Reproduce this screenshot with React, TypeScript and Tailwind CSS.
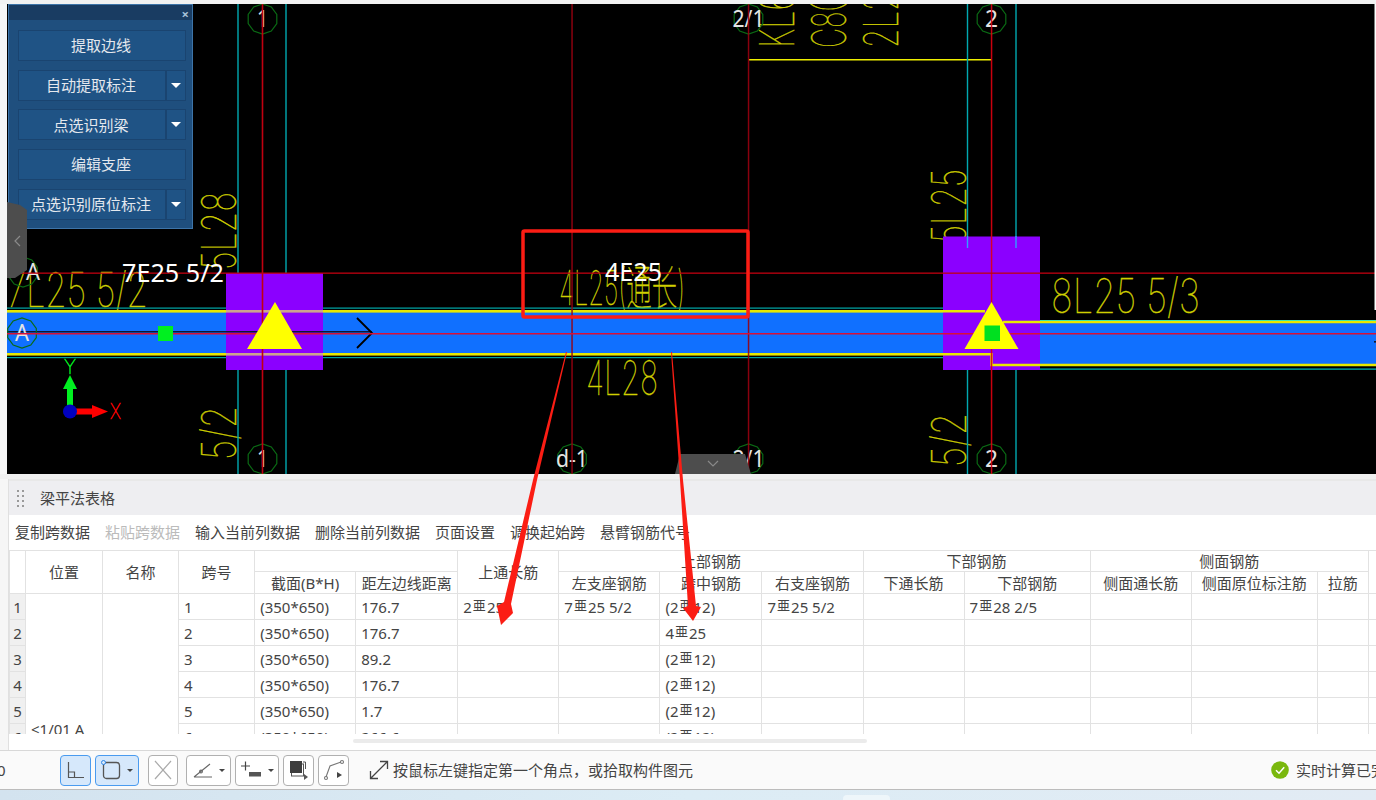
import React from "react";

const decagon = (cx: number, cy: number, r: number) =>
  Array.from({ length: 10 }, (_, i) => {
    const a = (Math.PI / 5) * i + Math.PI / 10;
    return `${(cx + r * Math.cos(a)).toFixed(1)},${(cy + r * Math.sin(a)).toFixed(1)}`;
  }).join(" ");

function Cad({ x, y, len, size = 48, rot, children }: { x: number; y: number; len: number; size?: number; rot?: boolean; children: string }) {
  return (
    <text
      x={x}
      y={y}
      textLength={len}
      lengthAdjust="spacingAndGlyphs"
      fontSize={size}
      fontWeight={100}
      fontFamily="Inter, 'Noto Sans CJK SC', sans-serif"
      fill="#d0d000"
      stroke="#d0d000"
      strokeWidth={0.4}
      transform={rot ? `rotate(-90 ${x} ${y})` : undefined}
    >
      {children}
    </text>
  );
}

function Bubble({ cx, cy, label, w, dx = 0 }: { cx: number; cy: number; label: string; w: number; dx?: number }) {
  return (
    <g>
      <polygon points={decagon(cx, cy, 15)} fill="none" stroke="#0a6a14" strokeWidth={1.2} />
      <text x={cx + dx - w / 2} y={cy + 8} textLength={w} lengthAdjust="spacingAndGlyphs" fontSize={23} fontFamily="'Noto Sans', sans-serif" fill="#e4e4e4">
        {label}
      </text>
    </g>
  );
}

function Canvas() {
  return (
    <svg width={1369} height={470} viewBox="7 4 1369 470" className="block">
      <rect x={7} y={4} width={1369} height={470} fill="#000" />
      {/* yellow annotations */}
      <Cad x={7} y={307} len={141}>7L25 5/2</Cad>
      <Cad x={559} y={305} len={126}>4L25(通长)</Cad>
      <Cad x={586} y={395} len={72}>4L28</Cad>
      <Cad x={1051} y={313} len={149}>8L25 5/3</Cad>
      <Cad x={236} y={270} len={78} rot>5L28</Cad>
      <Cad x={236} y={460} len={54} rot>5/2</Cad>
      <Cad x={966} y={243} len={74} rot>5L25</Cad>
      <Cad x={966} y={467} len={54} rot>5/2</Cad>
      <Cad x={794} y={48} len={74} rot>KL66</Cad>
      <Cad x={846} y={48} len={74} rot>C8@1</Cad>
      <Cad x={898} y={48} len={74} rot>2L25</Cad>
      <rect x={749} y={59} width={242} height={1.5} fill="#f0f000" />

      {/* left beam */}
      <rect x={7} y={307.5} width={940} height={1.2} fill="#00a8a8" />
      <rect x={7} y={357} width={940} height={1.2} fill="#00a0a0" />
      {/* right beam */}
      <rect x={1005} y={320} width={371} height={1.2} fill="#00e8e8" />
      <rect x={1005} y={368.5} width={371} height={1.2} fill="#00c0c0" />

      {/* axes: cyan */}
      {[238, 286, 967.5, 1016].map((x) => (
        <line key={x} x1={x} y1={4} x2={x} y2={474} stroke="#00a8b0" strokeWidth={1.4} />
      ))}
      <rect x={7} y={312} width={940} height={41} fill="#1070ff" />
      <rect x={1005} y={323} width={371} height={42} fill="#1070ff" />

      {/* columns */}
      <rect x={226} y={273} width={97} height={97} fill="#8b00ff" />
      <rect x={943} y={236.5} width={97} height={133.5} fill="#8b00ff" />
      <line x1={967.5} y1={236} x2={967.5} y2={248} stroke="#30a0ff" strokeWidth={1.4} />
      <line x1={1016} y1={236} x2={1016} y2={248} stroke="#30a0ff" strokeWidth={1.4} />

      {/* beam edges */}
      <rect x={7} y={310} width={219} height={2.6} fill="#e8e800" />
      <rect x={323} y={310} width={620} height={2.6} fill="#e8e800" />
      <rect x={226} y={310} width={97} height={2.6} fill="#e8e860" opacity={0.7} />
      <rect x={7} y={353} width={219} height={2.6} fill="#e8e800" />
      <rect x={323} y={353} width={620} height={2.6} fill="#e8e800" />
      <rect x={226} y={353} width={97} height={2.6} fill="#e8e860" opacity={0.7} />
      <polyline points="943,311.3 985,311.3" stroke="#e8e800" strokeWidth={2.4} fill="none" />
      <polyline points="943,354.3 991.5,354.3 991.5,365 1376,365" stroke="#e8e800" strokeWidth={2.4} fill="none" />
      <polyline points="1003,322 1376,322" stroke="#e8e800" strokeWidth={2.4} fill="none" />

      {/* black center line and arrow */}
      <rect x={7} y={331} width={365} height={1.5} fill="#101830" />
      <polyline points="357,318 372,333 357,348" fill="none" stroke="#000" strokeWidth={1.8} />
      <rect x={1374} y={341} width={2} height={1.6} fill="#101830" />

      {/* bubbles */}
      <Bubble cx={262.5} cy={19} label="1" w={11} />
      <Bubble cx={262.5} cy={459} label="1" w={11} />
      <Bubble cx={991.5} cy={19} label="2" w={13} />
      <Bubble cx={991.5} cy={459} label="2" w={13} />
      <Bubble cx={748.5} cy={19} label="2/1" w={32} />
      <Bubble cx={748.5} cy={459} label="2/1" w={32} />
      <Bubble cx={572} cy={459} label="d-1" w={32} />
      <Bubble cx={22} cy={333} label="A" w={14} />
      <Bubble cx={23} cy={272} label="A" w={14} dx={10} />

      {/* red axes */}
      <rect x={261.7} y={4} width={1.6} height={470} fill="#c00010" />
      <rect x={990.8} y={4} width={1.5} height={470} fill="#e00010" opacity={0.9} />
      <rect x={571.3} y={4} width={1.5} height={470} fill="#980010" opacity={0.9} />
      <rect x={747.8} y={4} width={1.5} height={470} fill="#980010" opacity={0.9} />
      <rect x={7} y={272.5} width={1369} height={1.3} fill="#c00010" />
      <rect x={7} y={333} width={1369} height={1.5} fill="#d81038" />

      {/* triangles & green nodes */}
      <polygon points="275,302 247,349 302,349" fill="#ffff00" />
      <polygon points="991.5,302 964.5,349 1018.5,349" fill="#ffff00" />
      <rect x={158} y={326} width={15} height={15} fill="#00f020" />
      <rect x={984.5} y={325.5} width={15.5} height={15.5} fill="#00e020" />

      {/* white labels */}
      <text x={122} y={282} textLength={102} lengthAdjust="spacingAndGlyphs" fontSize={25} fontFamily="'Noto Sans', sans-serif" fill="#ffffff">7E25 5/2</text>
      <text x={605} y={281} textLength={57} lengthAdjust="spacingAndGlyphs" fontSize={25} fontFamily="'Noto Sans', sans-serif" fill="#ffffff">4E25</text>

      {/* coordinate marker */}
      <rect x={67} y={386} width={6} height={22} fill="#00f020" />
      <polygon points="70,375 63,389 77,389" fill="#00f020" />
      <rect x={74} y={408.5} width={20} height={6} fill="#ff0000" />
      <polygon points="108,411.5 92,405 92,418" fill="#ff0000" />
      <circle cx={70} cy={411.5} r={7} fill="#0000c0" />
      <text x={64} y={374} textLength={12} lengthAdjust="spacingAndGlyphs" fontSize={20} fontWeight={100} fontFamily="Inter, sans-serif" fill="#00f020" stroke="#00f020" strokeWidth={0.6}>Y</text>
      <text x={110} y={419} textLength={11} lengthAdjust="spacingAndGlyphs" fontSize={21} fontWeight={100} fontFamily="Inter, sans-serif" fill="#ff0000" stroke="#ff0000" strokeWidth={0.6}>X</text>

      {/* collapse tab above the table */}
      <polygon points="680,454 745,454 751,474 675,474" fill="#4d4d4d" />
      <polyline points="708,461 713,466 718,461" fill="none" stroke="#8a8a8a" strokeWidth={1.2} />
      <rect x={1374.5} y={4} width={1.5} height={306} fill="#fff" />
    </svg>
  );
}

function PanelButton({ label, drop }: { label: string; drop?: boolean }) {
  return (
    <div className="flex h-[31px] w-[168px]">
      <div className="flex flex-1 items-center justify-center border border-[#1a4470] bg-[#1f5385] pr-[2px] text-[15px] text-[#e4e8ee]">{label}</div>
      {drop && (
        <div className="flex w-[20px] items-center justify-center border border-[#1a4470] bg-[#1f5385]">
          <span className="block h-0 w-0 border-x-[5px] border-t-[5px] border-x-transparent border-t-white" />
        </div>
      )}
    </div>
  );
}

const colWidths = [16, 77, 76, 76, 101, 102, 101, 101, 102, 101, 101, 126, 101, 126, 51, 40];

const Bar = () => <span className="relative top-[-3px] mx-[1px] text-[13px]">亜</span>;

const th = "border border-[#e2e2e2] pt-[1px] text-center font-normal text-[15px] leading-none overflow-hidden whitespace-nowrap";
const td = "border border-[#e2e2e2] pl-[5px] pt-[1px] text-[15px] leading-none whitespace-nowrap overflow-hidden align-middle";

const rows: { n: number; dist: string; top?: React.ReactNode; left?: React.ReactNode; mid: React.ReactNode; right?: React.ReactNode; bottom?: React.ReactNode }[] = [
  { n: 1, dist: "176.7", top: <>2<Bar />25</>, left: <>7<Bar />25 5/2</>, mid: <>(2<Bar />12)</>, right: <>7<Bar />25 5/2</>, bottom: <>7<Bar />28 2/5</> },
  { n: 2, dist: "176.7", mid: <>4<Bar />25</> },
  { n: 3, dist: "89.2", mid: <>(2<Bar />12)</> },
  { n: 4, dist: "176.7", mid: <>(2<Bar />12)</> },
  { n: 5, dist: "1.7", mid: <>(2<Bar />12)</> },
  { n: 6, dist: "266.6", mid: <>(2<Bar />12)</> },
];

function BeamTable() {
  return (
    <div className="h-[184px] overflow-hidden">
      <table className="w-[1400px] table-fixed border-collapse text-[#444]">
        <colgroup>
          {colWidths.map((w, i) => (
            <col key={i} style={{ width: w }} />
          ))}
        </colgroup>
        <thead>
          <tr className="h-[21px]">
            <th rowSpan={2} className={th}></th>
            <th rowSpan={2} className={th}>位置</th>
            <th rowSpan={2} className={th}>名称</th>
            <th rowSpan={2} className={th}>跨号</th>
            <th colSpan={2} className={th}></th>
            <th rowSpan={2} className={th}>上通长筋</th>
            <th colSpan={3} className={th}>上部钢筋</th>
            <th colSpan={2} className={th}>下部钢筋</th>
            <th colSpan={3} className={th}>侧面钢筋</th>
            <th rowSpan={2} className={th}></th>
          </tr>
          <tr className="h-[22px]">
            {["截面(B*H)", "距左边线距离", "左支座钢筋", "跨中钢筋", "右支座钢筋", "下通长筋", "下部钢筋", "侧面通长筋", "侧面原位标注筋", "拉筋"].map((t) => (
              <th key={t} className={th}>{t}</th>
            ))}
          </tr>
        </thead>
        <tbody>
          {rows.map((r) => (
            <tr key={r.n} className="h-[26px]">
              <td className="border border-[#e2e2e2] bg-[#f0f0f0] pt-[1px] text-center text-[15px] leading-none">{r.n}</td>
              {r.n === 1 && (
                <td rowSpan={10} className={td + " pt-[12px]"}>&lt;1/01 A</td>
              )}
              {r.n === 1 && <td rowSpan={10} className={td}></td>}
              <td className={td}>{r.n}</td>
              <td className={td}>(350*650)</td>
              <td className={td}>{r.dist}</td>
              <td className={td}>{r.top}</td>
              <td className={td}>{r.left}</td>
              <td className={td}>{r.mid}</td>
              <td className={td}>{r.right}</td>
              <td className={td}></td>
              <td className={td}>{r.bottom}</td>
              <td className={td}></td>
              <td className={td}></td>
              <td className={td}></td>
              <td className={td + " pl-[7px]"}>•</td>
            </tr>
          ))}
          {[7, 8, 9, 10].map((n) => (
            <tr key={n} className="h-[26px]">
              <td className="border border-[#e2e2e2] bg-[#f0f0f0]"></td>
              {Array.from({ length: 13 }, (_, i) => (
                <td key={i} className={td}></td>
              ))}
            </tr>
          ))}
        </tbody>
      </table>
    </div>
  );
}

const Caret = () => <span className="block h-0 w-0 border-x-[3px] border-t-[3px] border-x-transparent border-t-[#444]" />;

function ToolBtn({ w, active, children, caret }: { w: string; active?: boolean; children: React.ReactNode; caret?: boolean }) {
  return (
    <div className={`flex h-[31px] items-center justify-center gap-[6px] rounded-[4px] border-[1.5px] ${w} ${active ? "border-[#4a9bef] bg-[#d6e8fb]" : "border-[#b0b0b0] bg-white"}`}>
      {children}
      {caret && <Caret />}
    </div>
  );
}

function StatusBar() {
  return (
    <div className="flex h-[40px] items-center border-y border-y-[#d8d8d8] border-b-[#bcbcbc] bg-[#fafafa]">
      <span className="ml-[-3px] w-[63px] text-[15px] text-[#444]">0</span>
      <div className="flex gap-[4px]">
        <ToolBtn w="w-[31px]" active>
          <svg width="20" height="20" viewBox="0 0 20 20" fill="none" stroke="#555" strokeWidth="1.2"><path d="M2.5 2v15.5H18M2.5 12h6v5.5" /></svg>
        </ToolBtn>
        <ToolBtn w="w-[44px]" active caret>
          <svg width="20" height="20" viewBox="0 0 20 20" fill="none"><rect x="2.5" y="2.5" width="16" height="16" rx="3" stroke="#555" strokeWidth="1.3" /><circle cx="2.5" cy="2.5" r="2" fill="#d6e8fb" stroke="#2d86e8" /></svg>
        </ToolBtn>
      </div>
      <div className="ml-[9px] flex gap-[4px]">
        <ToolBtn w="w-[30px] mr-[4px]">
          <svg width="18" height="20" viewBox="0 0 18 20" fill="none" stroke="#aaa" strokeWidth="1.2"><path d="M1 1l16 18M17 1L1 19" /></svg>
        </ToolBtn>
        <ToolBtn w="w-[45px]" caret>
          <svg width="20" height="18" viewBox="0 0 20 18" fill="none" stroke="#666" strokeWidth="1.1"><path d="M1 16h18M1 16L17 3" /><circle cx="8" cy="10.5" r="1.4" /></svg>
        </ToolBtn>
        <ToolBtn w="w-[44px]" caret>
          <svg width="22" height="20" viewBox="0 0 22 20" fill="none"><path d="M1 6h9M5.5 1.5v9" stroke="#444" strokeWidth="1.2" /><rect x="9" y="12" width="12" height="4.5" fill="#555" /></svg>
        </ToolBtn>
        <ToolBtn w="w-[31px]">
          <svg width="20" height="22" viewBox="0 0 20 22" fill="none"><rect x="2.5" y="5" width="12" height="12" fill="#fff" stroke="#555" /><rect x="1" y="2" width="12" height="12" fill="#3e3e3e" /><path d="M14 3h2.5v7" stroke="#555" /><path d="M15 15l4 3-4 3z" fill="#555" /></svg>
        </ToolBtn>
        <ToolBtn w="w-[31px]">
          <svg width="22" height="22" viewBox="0 0 22 22" fill="none" stroke="#777" strokeWidth="1.1"><path d="M3 18L7 7 18 3" /><circle cx="3" cy="19" r="1.5" /><circle cx="19" cy="3" r="1.5" /><path d="M14 13l5 3-5 3z" fill="#444" stroke="none" /></svg>
        </ToolBtn>
      </div>
      <svg width="20" height="20" viewBox="0 0 20 20" fill="none" stroke="#444" strokeWidth="1.3" className="ml-[20px]">
        <path d="M1.5 18.5l17-17M11 1.5h7.5v7.5M1.5 11v7.5H9" />
      </svg>
      <span className="ml-[4px] whitespace-nowrap text-[15px] text-[#444]">按鼠标左键指定第一个角点，或拾取构件图元</span>
      <div className="ml-auto flex items-center gap-[7px]">
        <svg width="18" height="18" viewBox="0 0 18 18"><circle cx="9" cy="9" r="8.8" fill="#7ab80e" /><path d="M5 9.2l3 3 5.2-6" fill="none" stroke="#fff" strokeWidth="1.5" /></svg>
        <span className="w-[80px] overflow-hidden whitespace-nowrap text-[15px] text-[#444]">实时计算已完成</span>
      </div>
    </div>
  );
}

export default function App() {
  return (
    <div
      className="relative flex h-[800px] w-[1376px] flex-col overflow-hidden bg-[#f6f6f6] text-[#444]"
      style={{ fontFamily: "'Noto Sans', 'Noto Sans CJK SC', sans-serif" }}
    >
      <div className="h-[4px] shrink-0 bg-[#f2f2f2]" />
      <div className="relative ml-[7px] h-[470px] shrink-0">
        <Canvas />
        <div className="absolute left-[1px] top-0 h-[225px] w-[185px] border border-[#3d74a8] bg-[#1f4f7e]">
          <div className="flex h-[15px] items-center justify-end bg-[#193c62] pr-[3px] pt-[4px] text-[13px] font-bold leading-none text-[#a8c0d8]">×</div>
          <div className="flex flex-col gap-[8.7px] pl-[9px] pt-[10px]">
            <PanelButton label="提取边线" />
            <PanelButton label="自动提取标注" drop />
            <PanelButton label="点选识别梁" drop />
            <PanelButton label="编辑支座" />
            <PanelButton label="点选识别原位标注" drop />
          </div>
        </div>
        <div className="absolute left-[0px] top-[198px] h-[76px] w-[20px]">
          <svg width="20" height="76" viewBox="0 0 20 76"><polygon points="0,0 13,3 20,8 20,68 8,76 0,76" fill="#4d4d4d" /><polyline points="13,34 8,39 13,44" fill="none" stroke="#8a8a8a" strokeWidth="1.2" /></svg>
        </div>
      </div>
      <div className="h-[5px] shrink-0 bg-[#f0f0f0]" />
      <div className="ml-[8px] flex h-[271px] shrink-0 flex-col border-l border-[#e0e0e0] bg-white">
        <div className="flex h-[36px] shrink-0 items-center border-t-2 border-[#e8e8e8] bg-[#eeeef1]">
          <svg width="7" height="17" viewBox="0 0 7 17" className="ml-[8px]" fill="#999">
            {[0, 5, 10, 15].map((y) => (
              <React.Fragment key={y}>
                <rect x="0" y={y} width="2" height="2" />
                <rect x="5" y={y} width="2" height="2" />
              </React.Fragment>
            ))}
          </svg>
          <span className="ml-[16px] text-[15px]">梁平法表格</span>
        </div>
        <div className="flex h-[33px] shrink-0 items-center gap-[15px] pl-[6px] pt-[2px] text-[15px] text-[#444]">
          <span>复制跨数据</span>
          <span className="text-[#bbbbbb]">粘贴跨数据</span>
          <span>输入当前列数据</span>
          <span>删除当前列数据</span>
          <span>页面设置</span>
          <span>调换起始跨</span>
          <span>悬臂钢筋代号</span>
        </div>
        <div className="h-[2px] shrink-0" />
        <BeamTable />
        <div className="pl-[344px] pt-[5px]">
          <div className="h-[4px] w-[514px] rounded-full bg-[#ebebeb]" />
        </div>
      </div>
      <StatusBar />
      <div className="relative flex-1 bg-gradient-to-r from-[#d3e3ef] via-[#dcecf5] to-[#e2ebf4]">
        <div className="absolute left-[843px] top-[5px] h-[10px] w-[47px] rounded-t-[4px] bg-[#eef6fa]" />
      </div>
      {/* markup drawn over the screenshot */}
      <svg width="1376" height="800" viewBox="0 0 1376 800" className="pointer-events-none absolute inset-0">
        <rect x="523" y="231" width="225" height="86" rx="1.5" fill="none" stroke="#fb1d14" strokeWidth="3.5" />
        <polygon fill="#fb1d14" points="566,352 567,352 537,480 511,604 513,613 501,625 497,606 504,602 533,480" />
        <polygon fill="#fb1d14" points="671,352 672,352 683,480 696,606 701,607 693,621 683,608 688,606 680,480" />
      </svg>
    </div>
  );
}
